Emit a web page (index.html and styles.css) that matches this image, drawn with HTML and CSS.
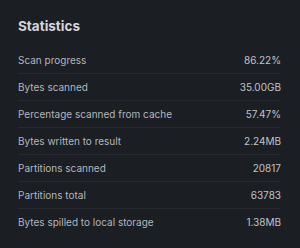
FILE: index.html
```html
<!DOCTYPE html>
<html lang="en">
<head>
<meta charset="utf-8">
<title>Statistics</title>
<link rel="stylesheet" href="styles.css">
</head>
<body>
<section class="stats">
  <h2 class="stats-title">Statistics</h2>
  <ul class="stats-list">
    <li class="stat-row"><span class="stat-label">Scan progress</span><span class="stat-value">86.22%</span></li>
    <li class="stat-row"><span class="stat-label">Bytes scanned</span><span class="stat-value">35.00GB</span></li>
    <li class="stat-row"><span class="stat-label">Percentage scanned from cache</span><span class="stat-value">57.47%</span></li>
    <li class="stat-row"><span class="stat-label">Bytes written to result</span><span class="stat-value">2.24MB</span></li>
    <li class="stat-row"><span class="stat-label">Partitions scanned</span><span class="stat-value">20817</span></li>
    <li class="stat-row"><span class="stat-label">Partitions total</span><span class="stat-value">63783</span></li>
    <li class="stat-row"><span class="stat-label">Bytes spilled to local storage</span><span class="stat-value">1.38MB</span></li>
  </ul>
</section>
</body>
</html>
```

FILE: styles.css
```css
html, body {
  margin: 0;
  padding: 0;
  background: #1b1e23;
}

body {
  font-family: Inter, "Noto Sans", sans-serif;
}

.stats {
  padding: 16px 19px 0 18px;
}

.stats-title {
  margin: 0 0 11px;
  font-size: 13.5px;
  line-height: 20px;
  font-weight: 700;
  color: #d3d5d9;
}

.stats-list {
  list-style: none;
  margin: 0;
  padding: 0;
}

.stat-row {
  display: flex;
  justify-content: space-between;
  align-items: center;
  height: 26px;
  border-bottom: 1px solid #272a31;
  font-size: 10px;
  color: #b3b6bd;
}

.stat-row:last-child {
  border-bottom: none;
}

.stat-value {
  color: #c0c3c9;
}
```
